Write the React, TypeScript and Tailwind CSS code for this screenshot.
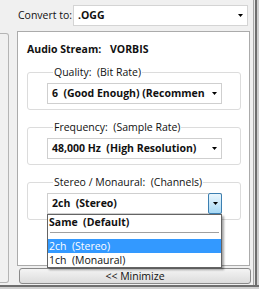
import React from "react";

function Arrow() {
  return (
    <svg width="5" height="3" viewBox="0 0 5 3" className="shrink-0">
      <path d="M0 0h5L2.5 3z" fill="#000" />
    </svg>
  );
}

function Select({ text }: { text: string }) {
  return (
    <div className="flex h-[21px] w-[175px] items-center justify-between border border-[#cfcfcf] bg-white pl-[4px] pr-[4px]">
      <span className="whitespace-pre font-bold leading-[15px]">{text}</span>
      <Arrow />
    </div>
  );
}

function Group({ label, children }: { label: string; children: React.ReactNode }) {
  return (
    <fieldset className="w-[214px] rounded-[3px] border border-[#dcdcdc] pb-[5px] pl-[19px] pt-[3px]">
      <legend className="ml-[6px] whitespace-pre px-[1px] leading-[15px]">{label}</legend>
      {children}
    </fieldset>
  );
}

export default function App() {
  return (
    <div className="flex h-[289px] w-[259px] flex-col overflow-hidden bg-[#f0f0f0] font-['Open_Sans',sans-serif] text-[10.5px] text-[#111]">
      <div className="flex h-[285px]">
        {/* main column */}
        <div className="flex w-[253px] flex-col">
          {/* convert row */}
          <div className="flex items-center pl-[18px] pt-[5px]">
            <span className="w-[55px] leading-[15px]">Convert to:</span>
            <div className="flex h-[21px] w-[175px] items-center justify-between border border-[#d4d4d4] bg-white pl-[4px] pr-[4px]">
              <span className="font-bold leading-[15px]">.OGG</span>
              <Arrow />
            </div>
          </div>

          <div className="mt-[5px] flex">
            {/* partial left panel */}
            <div className="mt-[2px] h-[250px] w-[9px] rounded-r-[3px] border-y border-r border-[#b4b4b4]" />

            <div className="ml-[8px] flex flex-col">
              {/* main panel */}
              <div className="flex h-[235px] w-[233px] flex-col border border-[#ababab] bg-white pl-[9px] pt-[10px]">
                <div className="flex font-bold leading-[15px]">
                  <span className="w-[83px]">Audio Stream:</span>
                  <span>VORBIS</span>
                </div>

                <div className="mt-[8px]">
                  <Group label="Quality:  (Bit Rate)">
                    <Select text="6  (Good Enough) (Recommen" />
                  </Group>
                </div>

                <div className="mt-[10px]">
                  <Group label="Frequency:  (Sample Rate)">
                    <Select text="48,000 Hz  (High Resolution)" />
                  </Group>
                </div>

                <div className="mt-[10px]">
                  <Group label="Stereo / Monaural:  (Channels)">
                    <div className="relative w-[175px]">
                      <div className="flex h-[21px] w-[175px] items-center border border-[#cfcfcf] bg-white pl-[4px]">
                        <span className="whitespace-pre font-bold leading-[15px]">2ch  (Stereo)</span>
                        <div className="-my-px -mr-px ml-auto flex h-[21px] w-[14px] items-center justify-center rounded-[2px] border border-[#3c7fb1] bg-gradient-to-b from-[#eaf6fd] to-[#a7d9f5]">
                          <Arrow />
                        </div>
                      </div>

                      {/* open dropdown list */}
                      <div className="absolute left-0 top-full z-10 w-[175px] border border-[#646464] bg-white shadow-[2px_2px_2px_rgba(0,0,0,0.35)]">
                        <div className="flex h-[15px] items-center whitespace-pre pl-[1px] font-bold leading-[15px]">
                          Same  (Default)
                        </div>
                        <div className="mx-[2px] mt-[2px] h-px bg-[#a0a0a0]" />
                        <div className="h-[6px]" />
                        <div className="flex h-[14px] items-center whitespace-pre bg-[#3399ff] pl-[1px] leading-[14px] text-white">
                          2ch  (Stereo)
                        </div>
                        <div className="flex h-[14px] items-center whitespace-pre pl-[1px] leading-[14px]">
                          1ch  (Monaural)
                        </div>
                      </div>
                    </div>
                  </Group>
                </div>
              </div>

              {/* minimize button */}
              <button className="ml-[2px] mt-[2px] flex h-[16px] w-[232px] items-center justify-center rounded-[3px] border border-[#8a8a8a] bg-gradient-to-b from-[#f4f4f4] to-[#dcdcdc] leading-[14px]">
                &lt;&lt; Minimize
              </button>
            </div>
          </div>
        </div>

        {/* right window edge */}
        <div className="flex">
          <div className="w-px bg-[#a8a8a8]" />
          <div className="w-px bg-[#e6e6e6]" />
          <div className="w-[2px] bg-[#6e6e6e]" />
          <div className="w-[2px] bg-[#cfcfcf]" />
        </div>
      </div>
      {/* bottom window edge */}
      <div className="h-[2px] bg-[#6e6e6e]" />
      <div className="h-[2px] bg-[#cfcfcf]" />
    </div>
  );
}
